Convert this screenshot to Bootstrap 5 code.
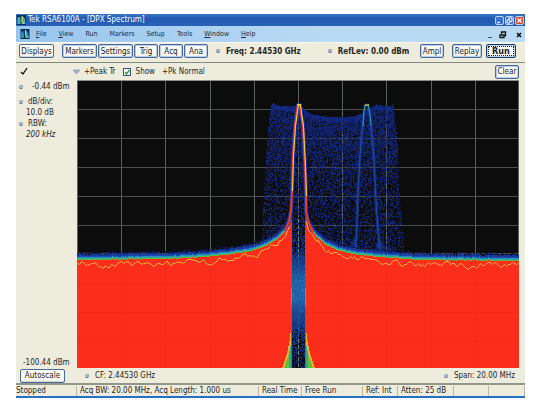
<!DOCTYPE html>
<html lang="en">
<head>
<meta charset="utf-8">
<meta name="viewport" content="width=device-width, initial-scale=1">
<title>Tek RSA6100A - [DPX Spectrum]</title>
<link href="https://cdn.jsdelivr.net/npm/bootstrap@5.3.0/dist/css/bootstrap.min.css" rel="stylesheet">
<style>
body{background:#fff;padding:14px 12px 10px 16px;font:8px/11px "DejaVu Sans Condensed","DejaVu Sans",sans-serif;color:#262626;min-height:100vh}
.app{background:#eeecdc;min-height:calc(100vh - 24px)}
.titlebar{background:linear-gradient(#3a78c6,#2158b0 40%,#2a62b8);color:#fff;height:12px;padding:0 1px}
.titlebar h1{font-size:8px;line-height:12px;margin:0 0 0 2px;font-weight:400}
.winbtn{width:9px;height:9px;padding:0;border:1px solid #bcd4f4;border-radius:2px;background:#3b6fd0;display:flex}
.winbtn.shut{background:#e0492a}
.winbtn svg{width:100%;height:100%}
.menubar{background:linear-gradient(90deg,#98c4ee,#b8daf4 60%,#b9daf3);height:16px;padding:0 2px 0 4px}
.menubar nav{gap:12px;margin-left:6px}
.menubar a{color:#1c2a3c;text-decoration:none;font-size:7px}
.menubar u{text-underline-offset:1px}
.mdibtn{border:0;background:none;padding:0;width:8px;height:9px;display:flex}
.toolbar{height:21px;padding:0 9px 3px 3px;border-bottom:1px solid #808a80;border-top:1px solid #f8f8f0}
.xp{height:14px;padding:0;border:1px solid #49699c;border-radius:2px;background:linear-gradient(#fff,#f3f2ea);box-shadow:inset 0 0 0 1px #b7cdea;color:#222;font:8px/11px "DejaVu Sans Condensed","DejaVu Sans",sans-serif;white-space:nowrap}
.plain{box-shadow:inset 0 -1px #d5d5cc}
.w-s{width:24px}.w-m{width:30px}.w-l{width:35px}.w-xl{width:45px}
.run{font-size:9px;font-weight:700;border-color:#1b3c70;outline:1px dotted #222;outline-offset:-3px}
.gap-tight{gap:1px}
.knob{width:4px;height:4px;border-radius:2px;background:#b3cbdc;border:1px solid #8b9caf;border-bottom-color:#4f6170;flex:none}
.readout{font-weight:700;gap:6px}
.reflev{margin-left:27px}
.main{display:grid;grid-template-columns:61px 1fr;grid-template-rows:17px 1fr 15px;padding-right:6px;flex:1}
.tracebar{font-size:8px;gap:7px}
.marker{margin:0 -3px 0 -4px}
.tracebar .form-check-input{width:8px;height:8px;margin:0;border-radius:0;border:1px solid #31577f;background-color:#fff;background-size:8px}
.tracebar .form-check-input:checked{background-image:none}
.tick{position:relative;display:flex}
.tick svg{position:absolute;left:1px;top:1px;pointer-events:none}
.side{padding:1px 0 0 3px;font-size:8px}
.side .knob{margin-right:5px}
.indent{padding-left:7px}
.plot{display:block;width:100%;height:100%;min-height:0}
.plotbox{min-height:288px;border-top:1px solid #8b8d86;background:#0c0c0c}
.plotbox canvas{height:287px}
.status{border-top:2px solid #8f968a;border-bottom:2px solid #2470c4;height:15px;font-size:8px;white-space:nowrap}
.status span{border-right:1px solid #b9b8aa;padding-left:3px;line-height:10px}
.s1{width:61px}.s2{width:182px}.s3{width:43px}.s4{width:61px}.s5{width:35px}.s6{width:56px}.s7{width:35px}
.status .s1{padding-left:0}
</style>
</head>
<body>
<div class="app d-flex flex-column">
  <header class="titlebar d-flex align-items-center">
    <svg width="9" height="10" viewBox="0 0 9 10" aria-hidden="true"><path fill="#092f55" d="M0 0h9v10H0z"/><path d="M1 9V4l1-2 1 3v4M5 9V2l2 1 1 6" fill="#2394bd" stroke="#73ce9b"/><path d="M5 1v4l2 4" fill="none" stroke="#e3df53"/></svg>
    <h1 class="me-auto">Tek RSA6100A - [DPX Spectrum]</h1>
    <div class="d-flex gap-tight">
      <button class="winbtn" aria-label="Minimize"><svg viewBox="0 0 7 7"><path d="M1 5.5h3" stroke="#fff" stroke-width="1.3"/></svg></button>
      <button class="winbtn" aria-label="Restore"><svg viewBox="0 0 7 7"><path d="M2.5 2.5V1H6v3.5H4.5M1 3h3v3H1z" fill="none" stroke="#fff"/></svg></button>
      <button class="winbtn shut" aria-label="Close"><svg viewBox="0 0 7 7"><path d="M1.5 1.5l4 4m0-4l-4 4" stroke="#fff" stroke-width="1.4"/></svg></button>
    </div>
  </header>
  <div class="menubar d-flex align-items-center">
    <svg width="10" height="10" viewBox="0 0 9 10" aria-hidden="true"><path fill="#092f55" d="M0 0h9v10H0z"/><path d="M1 9V4l1-2 1 3v4M5 9V2l2 1 1 6" fill="#2394bd" stroke="#337fc5"/><path d="M5 1v4l2 4" fill="none" stroke="#d5df53"/></svg>
    <nav class="d-flex me-auto">
      <a href="#"><u>F</u>ile</a><a href="#"><u>V</u>iew</a><a href="#">Run</a><a href="#">Markers</a><a href="#">Setup</a><a href="#">Tools</a><a href="#"><u>W</u>indow</a><a href="#"><u>H</u>elp</a>
    </nav>
    <div class="d-flex gap-1">
      <button class="mdibtn" aria-label="Minimize document"><svg width="8" height="9"><path d="M1 7.5h4" stroke="#46586a"/></svg></button>
      <button class="mdibtn" aria-label="Restore document"><svg width="8" height="9"><path d="M2.5 4V2h4v3.500H5M1 5h4v2.500H1z" fill="none" stroke="#111" stroke-width="1.3"/></svg></button>
      <button class="mdibtn ms-1" aria-label="Close document"><svg width="8" height="9"><path d="M2 3l4 4m0-4L2 7" stroke="#111" stroke-width="1.6"/></svg></button>
    </div>
  </div>
  <div class="toolbar d-flex align-items-center">
    <button class="xp w-l plain me-2">Displays</button>
    <div class="d-flex gap-tight">
      <button class="xp w-l">Markers</button><button class="xp w-l">Settings</button><button class="xp w-s">Trig</button><button class="xp w-s">Acq</button><button class="xp w-s">Ana</button>
    </div>
    <div class="readout d-flex align-items-center ms-2"><i class="knob"></i><span>Freq: 2.44530 GHz</span></div>
    <div class="readout reflev d-flex align-items-center me-auto"><i class="knob"></i><span>RefLev: 0.00 dBm</span></div>
    <button class="xp w-s me-2">Ampl</button>
    <button class="xp w-m me-1">Replay</button>
    <button class="xp w-m run">Run</button>
  </div>
  <main class="main">
    <div class="d-flex align-items-center ps-1"><svg width="8" height="9" aria-label="Trace enabled"><path d="M1 5l2 2 4-6" fill="none" stroke="#111" stroke-width="1.3"/></svg></div>
    <div class="tracebar d-flex align-items-center">
      <svg class="marker" width="7" height="6" aria-hidden="true"><path d="M0 1h7L3.500 5z" fill="#a5b3c9" stroke="#77869b" stroke-width=".5"/></svg>
      <span>+Peak Tr</span>
      <label class="d-flex align-items-center gap-tight"><span class="tick me-1"><input class="form-check-input" type="checkbox" checked><svg width="6" height="6"><path d="M1 3l1.500 2L5.500 1" fill="none" stroke="#259b25" stroke-width="1.3"/></svg></span>Show</label>
      <span>+Pk Normal</span>
      <button class="xp w-s ms-auto">Clear</button>
    </div>
    <aside class="side d-flex flex-column">
      <div class="d-flex align-items-center mb-1"><i class="knob"></i><span class="ps-1">-0.44 dBm</span></div>
      <div class="d-flex align-items-center"><i class="knob"></i>dB/div:</div>
      <div class="indent">10.0 dB</div>
      <div class="d-flex align-items-center"><i class="knob"></i>RBW:</div>
      <div class="indent fst-italic">200 kHz</div>
      <div class="mt-auto ps-1">-100.44 dBm</div>
    </aside>
    <div class="plotbox"><canvas class="plot" id="spectrum" width="442" height="287" role="img" aria-label="DPX spectrum bitmap"></canvas></div>
    <div class="d-flex align-items-center ps-1"><button class="xp plain w-xl">Autoscale</button></div>
    <div class="d-flex align-items-center justify-content-between">
      <span class="readout d-flex align-items-center fw-normal ps-2"><i class="knob"></i>CF: 2.44530 GHz</span>
      <span class="readout d-flex align-items-center fw-normal pe-1"><i class="knob"></i>Span: 20.00 MHz</span>
    </div>
  </main>
  <footer class="status d-flex align-items-center">
    <span class="s1">Stopped</span><span class="s2">Acq BW: 20.00 MHz, Acq Length: 1.000 us</span><span class="s3">Real Time</span><span class="s4">Free Run</span><span class="s5">Ref: Int</span><span class="s6">Atten: 25 dB</span><span class="s7">&nbsp;</span><span class="flex-fill">&nbsp;</span>
  </footer>
</div>
<script src="https://cdn.jsdelivr.net/npm/bootstrap@5.3.0/dist/js/bootstrap.bundle.min.js"></script>
<script>
const cv = document.getElementById('spectrum'), g = cv.getContext('2d'), W = 442, H = 287;
let seed = 7;
const rnd = () => (seed = (seed * 16807) % 2147483647) / 2147483647;
// Piecewise linear lookup through [x, y] points
const lerp = (pts, x) => {
  if (x <= pts[0][0]) return pts[0][1];
  for (let i = 1; i < pts.length; i++) if (x <= pts[i][0]) {
    const [a, b] = pts[i - 1], [c, d] = pts[i];
    return b + (d - b) * (x - a) / (c - a);
  }
  return pts[pts.length - 1][1];
};
const floorPts = [[0,178],[90,177],[130,175],[163,171],[178,168],[190,163],[200,157],[208,149],[213,140],[214,134],[229,134],[232,145],[238,154],[247,162],[259,168],[275,172],[300,175],[340,178],[442,179]];
const topPts = [[194,24],[196,22],[201,24],[217,25],[222,22],[228,29],[235,33],[248,35],[266,36],[280,34],[289,29],[299,23],[304,24],[313,25],[317,22],[320,26]];
const leftEdge = [[22,194],[60,190],[110,187],[180,184]], rightEdge = [[22,316],[60,320],[110,322],[150,325],[180,329]];
const px = (x, y, c, w = 1, h = 1) => { g.fillStyle = c; g.fillRect(x, y, w, h); };
px(0, 0, '#0c0c0c', W, H);
for (let i = 0; i <= 10; i++) {
  px(Math.min(W - 1, Math.round(i * 44.2)), 0, '#59615f', 1, H);
  if (i) px(0, Math.round(i * 28.9) - 1, '#49504f', W, 1);
}
// Low-density band
for (let y = 20; y < 181; y++) {
  const l = lerp(leftEdge, y), r = lerp(rightEdge, y);
  for (let x = Math.round(l); x < r; x++) {
    const t = lerp(topPts, x);
    if (y < t) continue;
    const deep = y - t, p = deep < 5 ? 1 : Math.max(.36, .85 - deep / 180);
    if (rnd() < p) { const v = rnd(); px(x, y, `rgba(${15 + v * 8},${30 + v * 18},${100 + v * 45},${deep < 5 ? .95 : .75})`, 1, rnd() < .35 ? 2 : 1); }
  }
}
const stroke = (pts, c, w) => { g.beginPath(); pts.forEach((p, i) => i ? g.lineTo(...p) : g.moveTo(...p)); g.strokeStyle = c; g.lineWidth = w; g.lineJoin = 'round'; g.stroke(); };
// Second carrier
const p2 = [[278,178],[280,140],[281,110],[283,74],[285,50],[287,32],[288,24],[291,24],[293,35],[295,55],[297,80],[299,120],[301,150],[304,178]];
stroke(p2, 'rgba(22,60,170,.5)', 3); stroke(p2, '#1c4cae', 1);
stroke([[286,45],[287,30],[288,24],[291,24],[293,32],[294,45]], '#2699b4', 1);
px(288, 23, '#65bf42', 4, 2); px(289, 23, '#e55b29', 2, 1);
for (const s of [277, 303]) { g.beginPath(); g.moveTo(s - 9, 178); g.lineTo(s, 155); g.lineTo(s + 9, 178); g.fillStyle = 'rgba(22,66,170,.45)'; g.fill(); }
// Noise floor: blue haze, cyan and green rims, saturated red
for (let x = 0; x < W; x++) {
  if (x >= 214 && x < 229) continue;
  const y = Math.round(lerp(floorPts, x) + (rnd() - .5) * .6);
  for (let k = 3; k < 8; k++) if (rnd() < (9 - k) / 5) px(x, y - k, k > 5 ? '#101c5c' : '#17399c');
  px(x, y - 3, '#1c4cb0', 1, 1); px(x, y - 2, '#2290bd'); px(x, y - 1, '#32a6a0'); px(x, y, '#65b83a');
  px(x, y + 1, '#fb2e1b', 1, H);
}
// Central channel
for (let y = 134; y < H; y++) for (let x = 214; x < 229; x++) {
  const p = lerp([[134,.45],[165,.6],[178,1],[245,1],[258,.6],[287,.3]], y);
  const b = lerp([[134,0],[170,.1],[185,.4],[200,.85],[218,.85],[235,.35],[260,.1],[287,0]], y);
  if (rnd() < p) { const v = b + (rnd() - .5) * .35; px(x, y, `rgb(${18 + v * 15},${40 + v * 72},${115 + v * 68})`); }
  else px(x, y, '#0c0c0c');
}
for (let y = 134; y < H; y++) if (y % 6 < 4) px(221, y, y < 175 || y > 255 ? '#737b74' : '#315d9b');
for (const [x, o] of [[214, -1], [228, 1]]) {
  px(x, 136, '#1e7fb1', 1, H); px(x, 207, '#5aac55', 1, 18);
  for (let y = 240; y < H; y++) {
    const n = Math.round(Math.pow((y - 240) / 47, 2) * 9);
    for (let k = 1; k <= n; k++) px(x + o * k, y, k > n - 2 ? '#e8b52c' : k < 3 ? '#35a987' : '#62bd3d');
  }
}
// Main carrier
const p1 = [[208,150],[212,140],[214,130],[215,110],[216,75],[217,60],[218,45],[220,30],[221,24],[223,24],[224,32],[226,45],[227,65],[228,85],[229,115],[229,130],[231,140],[236,151]];
stroke(p1, 'rgba(23,57,180,.8)', 4); stroke(p1, '#ef3a1c', 2);
stroke(p1.slice(3, 15).map(([x, y]) => [x + .5, y]), '#f5d24e', 1);
px(220, 23, '#ffce3c', 4, 1);
// Peak trace over the floor
for (const [a, b] of [[0, 214], [229, 442]]) {
  const t = []; let v = 5;
  for (let x = a; x < b; x += 2) { v += (rnd() - .5) * 5 + (5 - v) * .25; v = Math.max(2, Math.min(9, v)); t.push([x + .5, Math.round(lerp(floorPts, x) + v) + .5]); }
  stroke(t, '#ffb848', 1);
}
// Faint graticule on the red area
g.globalAlpha = .025;
for (let i = 1; i < 10; i++) { px(Math.round(i * 44.2), 181, '#000', 1, 106); if (i > 6) px(0, Math.round(i * 28.9), '#000', W, 1); }
</script>
</body>
</html>
